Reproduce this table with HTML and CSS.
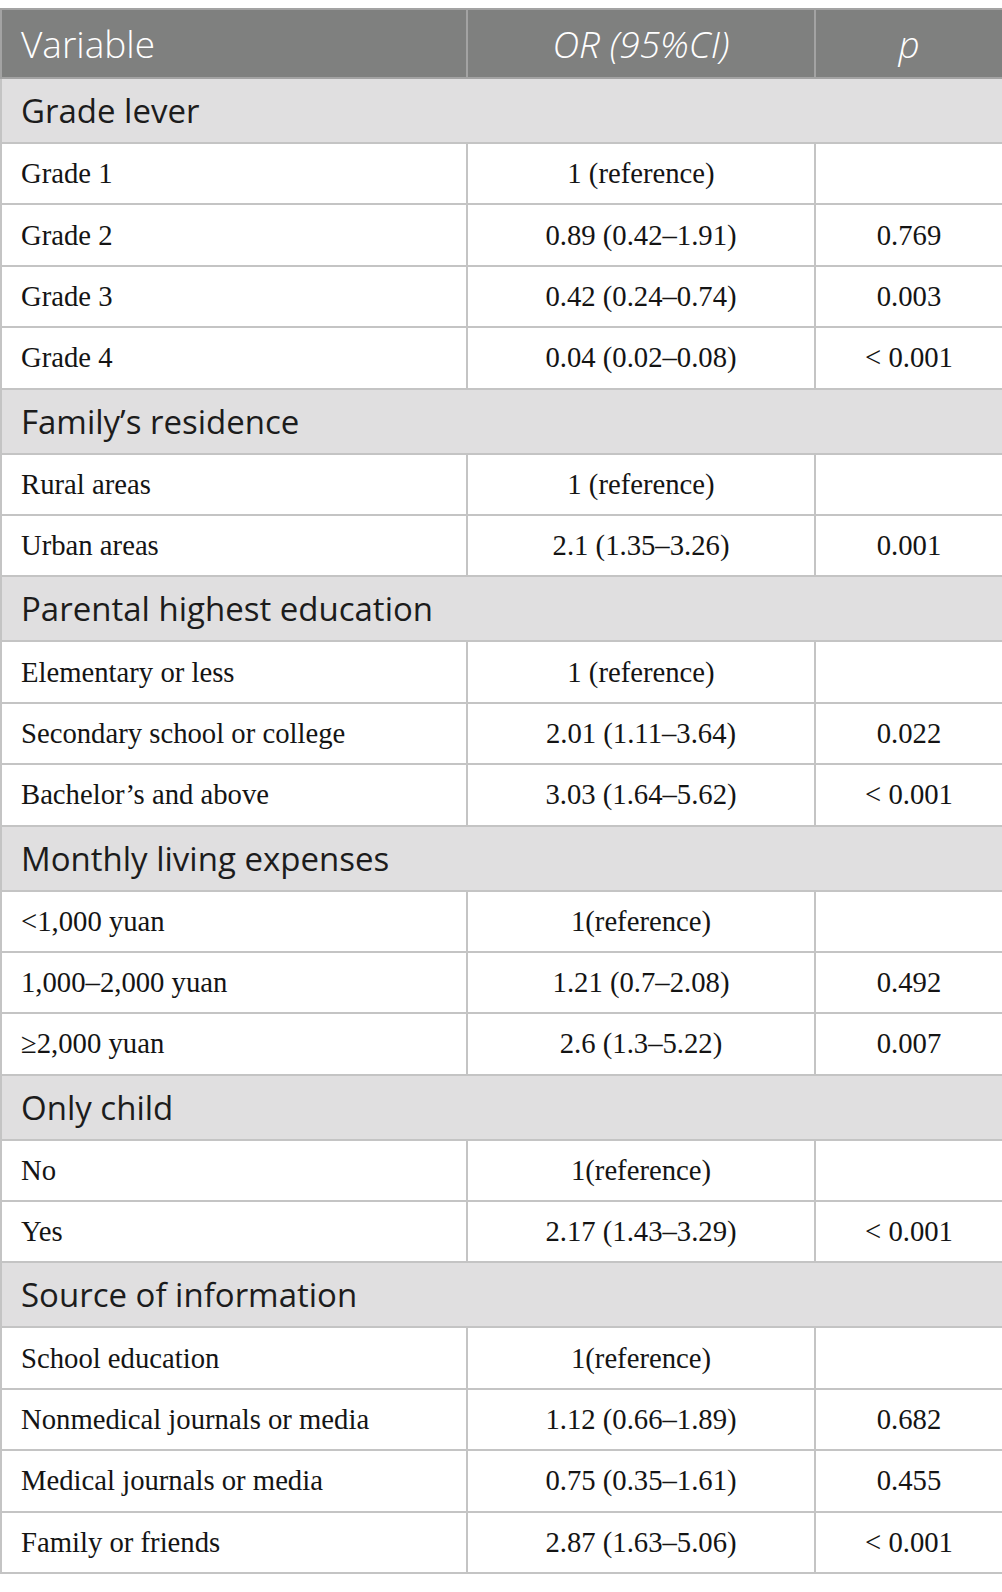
FILE: index.html
```html
<!DOCTYPE html>
<html>
<head>
<meta charset="utf-8">
<link rel="stylesheet" href="styles.css">
</head>
<body>
<table class="tbl">
  <colgroup><col class="c1"><col class="c2"><col class="c3"></colgroup>
  <thead>
    <tr class="head"><th class="left">Variable</th><th><i>OR (95%CI)</i></th><th><i>p</i></th></tr>
  </thead>
  <tbody>
    <tr class="grp"><td colspan="3">Grade lever</td></tr>
    <tr class="row"><td>Grade 1</td><td>1 (reference)</td><td></td></tr>
    <tr class="row"><td>Grade 2</td><td>0.89 (0.42–1.91)</td><td>0.769</td></tr>
    <tr class="row"><td>Grade 3</td><td>0.42 (0.24–0.74)</td><td>0.003</td></tr>
    <tr class="row"><td>Grade 4</td><td>0.04 (0.02–0.08)</td><td>&lt; 0.001</td></tr>
    <tr class="grp"><td colspan="3">Family’s residence</td></tr>
    <tr class="row"><td>Rural areas</td><td>1 (reference)</td><td></td></tr>
    <tr class="row"><td>Urban areas</td><td>2.1 (1.35–3.26)</td><td>0.001</td></tr>
    <tr class="grp"><td colspan="3">Parental highest education</td></tr>
    <tr class="row"><td>Elementary or less</td><td>1 (reference)</td><td></td></tr>
    <tr class="row"><td>Secondary school or college</td><td>2.01 (1.11–3.64)</td><td>0.022</td></tr>
    <tr class="row"><td>Bachelor’s and above</td><td>3.03 (1.64–5.62)</td><td>&lt; 0.001</td></tr>
    <tr class="grp"><td colspan="3">Monthly living expenses</td></tr>
    <tr class="row"><td>&lt;1,000 yuan</td><td>1(reference)</td><td></td></tr>
    <tr class="row"><td>1,000–2,000 yuan</td><td>1.21 (0.7–2.08)</td><td>0.492</td></tr>
    <tr class="row"><td>≥2,000 yuan</td><td>2.6 (1.3–5.22)</td><td>0.007</td></tr>
    <tr class="grp"><td colspan="3">Only child</td></tr>
    <tr class="row"><td>No</td><td>1(reference)</td><td></td></tr>
    <tr class="row"><td>Yes</td><td>2.17 (1.43–3.29)</td><td>&lt; 0.001</td></tr>
    <tr class="grp"><td colspan="3">Source of information</td></tr>
    <tr class="row"><td>School education</td><td>1(reference)</td><td></td></tr>
    <tr class="row"><td>Nonmedical journals or media</td><td>1.12 (0.66–1.89)</td><td>0.682</td></tr>
    <tr class="row"><td>Medical journals or media</td><td>0.75 (0.35–1.61)</td><td>0.455</td></tr>
    <tr class="row"><td>Family or friends</td><td>2.87 (1.63–5.06)</td><td>&lt; 0.001</td></tr>
  </tbody>
</table>
</body>
</html>
```

FILE: styles.css
```css
html, body {
  margin: 0;
  padding: 0;
  background: #ffffff;
}
body {
  padding-top: 8px;
}
.tbl {
  width: 1002px;
  border-collapse: collapse;
  table-layout: fixed;
}
.c1 { width: 466px; }
.c2 { width: 348px; }
.c3 { width: 188px; }
.tbl th, .tbl td {
  border: 2px solid #c4c4c4;
  padding: 0 19px;
  vertical-align: middle;
}
.head {
  height: 69px;
  background: #7f807f;
}
.head th {
  color: #ffffff;
  font-family: "Open Sans", "Noto Sans", sans-serif;
  font-weight: 300;
  font-size: 37px;
  text-align: center;
  border-color: #a3a3a3;
}
.head th.left {
  text-align: left;
}
.grp {
  height: 65px;
  background: #e0dfe0;
}
.grp td {
  font-family: "Open Sans", "Noto Sans", sans-serif;
  font-size: 33px;
  color: #1c1c1c;
}
.row {
  height: 61.4px;
}
.row td {
  font-family: "Liberation Serif", "Times New Roman", serif;
  font-size: 28.7px;
  color: #141414;
  text-align: center;
}
.row td:first-child {
  text-align: left;
}
```
